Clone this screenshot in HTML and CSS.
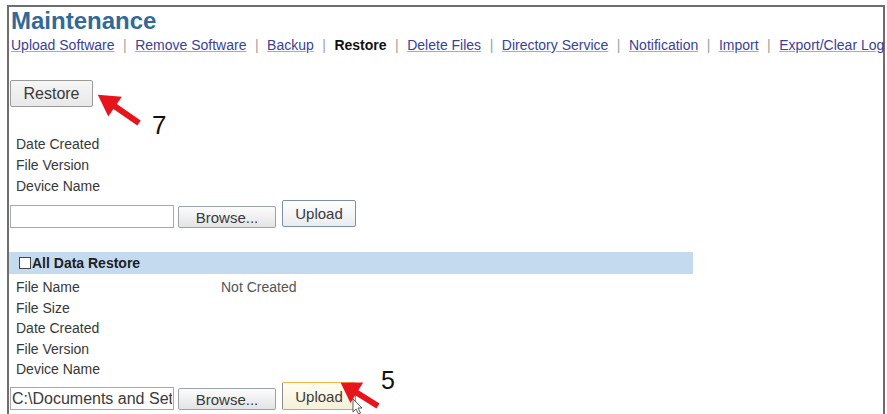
FILE: index.html
```html
<!DOCTYPE html>
<html lang="en">
<head>
  <meta charset="UTF-8" />
  <title>Maintenance - Restore</title>
  <link rel="stylesheet" href="styles.css">
</head>
<body>
  <div class="frame">
    <h1 class="page-title">Maintenance</h1>
    <nav class="tabs">
      <a href="#">Upload Software</a><span class="sep">|</span>
      <a href="#">Remove Software</a><span class="sep">|</span>
      <a href="#">Backup</a><span class="sep">|</span>
      <span class="current">Restore</span><span class="sep">|</span>
      <a href="#">Delete Files</a><span class="sep">|</span>
      <a href="#">Directory Service</a><span class="sep">|</span>
      <a href="#">Notification</a><span class="sep">|</span>
      <a href="#">Import</a><span class="sep">|</span>
      <a href="#">Export/Clear Log</a>
    </nav>

    <div class="restore-action">
      <button class="btn btn-restore" type="button">Restore</button>
    </div>

    <div class="info-list">
      <div class="info-row">Date Created</div>
      <div class="info-row">File Version</div>
      <div class="info-row">Device Name</div>
    </div>

    <div class="upload-row">
      <input class="file-path" type="text" value="" />
      <button class="btn btn-browse" type="button">Browse...</button>
      <button class="btn btn-upload" type="button">Upload</button>
    </div>

    <div class="section-head">
      <span class="check"></span>All Data Restore
    </div>

    <div class="data-grid">
      <span>File Name</span><span class="value">Not Created</span>
      <span>File Size</span><span></span>
      <span>Date Created</span><span></span>
      <span>File Version</span><span></span>
      <span>Device Name</span><span></span>
    </div>

    <div class="upload-row upload-row-last">
      <input class="file-path" type="text" value="C:\Documents and Settings\Administrator\Desktop\backup.dat" />
      <button class="btn btn-browse" type="button">Browse...</button>
      <button class="btn btn-upload hover" type="button">Upload</button>
    </div>
  </div>

  <!-- annotations laid over the screenshot -->
  <svg class="marks" width="887" height="414" viewBox="0 0 887 414">
    <g transform="translate(139 123) rotate(-145.5)">
      <path d="M0 -3 L29 -3 L29 -12 L50 0 L29 12 L29 3 L0 3 Z" fill="#e8141b" />
    </g>
    <g transform="translate(353 399)">
      <path d="M0 0 L0 13 L3 10 L5.5 15 L7.5 14 L5 9 L9 9 Z" fill="#fff" stroke="#333" stroke-width="0.8" />
    </g>
    <g transform="translate(378 406) rotate(-148)">
      <path d="M0 -3 L25 -3 L25 -12 L44 0 L25 12 L25 3 L0 3 Z" fill="#e8141b" />
    </g>
  </svg>
  <span class="mark-num num-7">7</span>
  <span class="mark-num num-5">5</span>
</body>
</html>
```

FILE: styles.css
```css
body {
  margin: 0;
  font-family: 'Liberation Sans', Arial, sans-serif;
  background-color: #fff;
  color: #383838;
  overflow: hidden;
}

.frame {
  margin: 5px 2px 0 7px;
  border: 2px solid #6e6e6e;
  border-bottom: none;
  height: 420px;
  box-sizing: border-box;
}

.page-title {
  margin: 0 0 0 2px;
  font-size: 24px;
  line-height: 28px;
  font-weight: bold;
  color: #33689a;
}

.tabs {
  margin: 1px 0 0 2px;
  font-size: 14px;
  line-height: 18px;
  white-space: nowrap;
  display: flex;
}

.tabs a {
  color: #3a3f98;
  text-decoration: underline;
  text-decoration-color: #a4a9cc;
}

.tabs .current {
  color: #111;
  font-weight: bold;
}

.tabs .sep {
  color: #a0a0a0;
  margin: 0 8.5px;
}

/* botones estilo XP */
.btn {
  font-family: 'Liberation Sans', Arial, sans-serif;
  font-size: 15px;
  color: #3a3a3a;
  border: 1px solid #8e9aa6;
  border-radius: 2px;
  background: linear-gradient(#fcfcfc, #e4e4e4);
  padding: 0;
  box-sizing: border-box;
}

.restore-action {
  margin: 26px 0 0 1px;
}

.btn-restore {
  width: 83px;
  height: 27px;
  font-size: 16px;
  border-color: #9a9a9a;
  background: linear-gradient(#f6f6f6, #e8e8e8);
  display: block;
}

.info-list {
  margin-top: 27px;
  padding-left: 7px;
  font-size: 14px;
}

.info-row {
  height: 21px;
  line-height: 21px;
}

.upload-row {
  margin: 3px 0 0 1px;
  display: flex;
  align-items: flex-end;
  height: 28px;
}

.upload-row-last {
  margin-top: 2.5px;
}

.file-path {
  width: 164px;
  height: 23px;
  margin: 0;
  padding: 0 1px;
  box-sizing: border-box;
  border: 1px solid #a5a9ae;
  font-family: 'Liberation Sans', Arial, sans-serif;
  font-size: 16px;
  color: #3a3a3a;
  overflow: hidden;
}

.btn-browse {
  width: 98px;
  height: 22px;
  margin-left: 4px;
  border-color: #9aa2aa;
}

.btn-upload {
  width: 74px;
  height: 27px;
  margin: 0 0 1px 6px;
  border-color: #7d8fa3;
  background: linear-gradient(#ffffff, #e9ecef);
}

.btn-upload.hover {
  border-color: #8c8c8c;
  border-top-color: #f2b545;
  border-bottom-color: #e3a52f;
  background: linear-gradient(#fffdf2, #f4f0d8);
  margin-bottom: 0;
  height: 28px;
}

.section-head {
  margin-top: 24px;
  width: 684px;
  height: 22px;
  background-color: #c4daee;
  font-size: 14px;
  font-weight: bold;
  color: #1e1e1e;
  display: flex;
  align-items: center;
  padding-left: 10px;
  box-sizing: border-box;
}

.check {
  width: 10px;
  height: 10px;
  border: 1px solid #444;
  background-color: #fff;
  margin-right: 1px;
}

.data-grid {
  margin-top: 3px;
  padding-left: 7px;
  display: grid;
  grid-template-columns: 205px auto;
  grid-auto-rows: 20.5px;
  align-items: center;
  font-size: 14px;
}

.data-grid .value {
  color: #555;
}

.marks {
  position: absolute;
  left: 0;
  top: 0;
  pointer-events: none;
}

.mark-num {
  position: absolute;
  font-family: 'Liberation Sans', Arial, sans-serif;
  font-size: 26px;
  line-height: 26px;
  color: #111;
}

.num-7 {
  left: 152px;
  top: 112px;
}

.num-5 {
  left: 381px;
  top: 367px;
  font-size: 25px;
}
```
